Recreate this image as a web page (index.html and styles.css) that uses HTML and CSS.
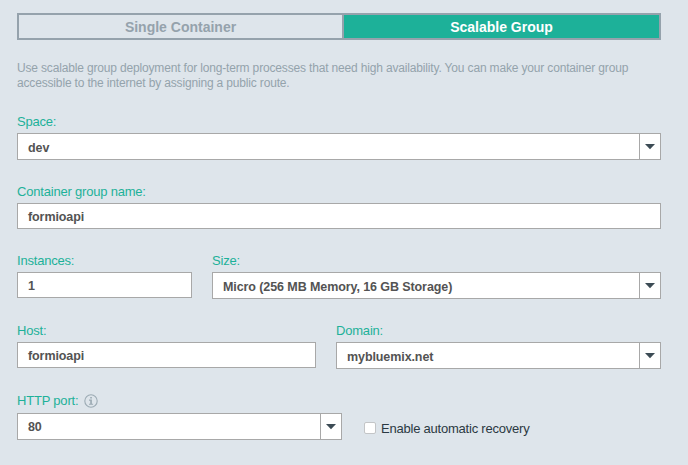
FILE: index.html
```html
<!DOCTYPE html>
<html lang="en">
<head>
<meta charset="utf-8">
<title>Container group</title>
<link rel="stylesheet" href="styles.css">
</head>
<body>
<form class="panel">
  <div class="tabs">
    <div class="tab"><span>Single Container</span></div>
    <div class="tab active"><span>Scalable Group</span></div>
  </div>
  <p class="intro">Use scalable group deployment for long-term processes that need high availability. You can make your container group<br>accessible to the internet by assigning a public route.</p>

  <div class="row space">
    <div class="field">
      <div class="label"><span>Space:</span></div>
      <div class="control select"><span class="value">dev</span><span class="toggle"><svg width="10" height="6" viewBox="0 0 10 6"><path d="M0 0H10L5 5.2Z"/></svg></span></div>
    </div>
  </div>
  <div class="row name">
    <div class="field">
      <div class="label"><span>Container group name:</span></div>
      <div class="control"><span class="value">formioapi</span></div>
    </div>
  </div>
  <div class="row size">
    <div class="field instances">
      <div class="label"><span>Instances:</span></div>
      <div class="control"><span class="value">1</span></div>
    </div>
    <div class="field">
      <div class="label"><span>Size:</span></div>
      <div class="control select"><span class="value">Micro (256 MB Memory, 16 GB Storage)</span><span class="toggle"><svg width="10" height="6" viewBox="0 0 10 6"><path d="M0 0H10L5 5.2Z"/></svg></span></div>
    </div>
  </div>
  <div class="row host">
    <div class="field hostname">
      <div class="label"><span>Host:</span></div>
      <div class="control"><span class="value">formioapi</span></div>
    </div>
    <div class="field">
      <div class="label"><span>Domain:</span></div>
      <div class="control select"><span class="value">mybluemix.net</span><span class="toggle"><svg width="10" height="6" viewBox="0 0 10 6"><path d="M0 0H10L5 5.2Z"/></svg></span></div>
    </div>
  </div>
  <div class="row port">
    <div class="field http">
      <div class="label"><span>HTTP port:</span><svg class="info" width="14" height="14" viewBox="0 0 14 14"><circle cx="7" cy="7" r="6.2"/><path d="M6.2 3H7.9V4.6H6.2ZM5 5.6H7.9V9.7H9.1V10.8H5V9.7H6.2V6.7H5Z"/></svg></div>
      <div class="control select"><span class="value">80</span><span class="toggle"><svg width="10" height="6" viewBox="0 0 10 6"><path d="M0 0H10L5 5.2Z"/></svg></span></div>
    </div>
    <div class="recovery"><span class="box"></span><span class="caption">Enable automatic recovery</span></div>
  </div>
</form>
</body>
</html>
```
FILE: styles.css
```css
* { box-sizing: border-box; }

body {
  margin: 0;
  background: #dee5eb;
  font-family: "Liberation Sans", Arial, sans-serif;
}

.panel {
  width: 644px;
  margin: 13px 0 0 17px;
}

.tabs {
  display: flex;
  height: 27px;
  border: 2px solid #95a2ac;
  font-size: 14px;
  font-weight: bold;
  line-height: 24px;
  text-align: center;
  color: #95a2ac;
}

.tab { flex: 0 0 325px; border-right: 2px solid #95a2ac; }
.tab.active { flex: 1; border-right: 0; background: #1db199; color: #fff; }

.intro {
  height: 30px;
  margin: 21px 0 0;
  font-size: 12px;
  line-height: 15px;
  letter-spacing: -0.163px;
  white-space: nowrap;
  color: #94a3ac;
}

.row { display: flex; gap: 20px; height: 46px; margin-top: 24px; }
.row.name { height: 45px; }
.row.host { height: 47px; }
.field { flex: 1; }
.instances { flex: 0 0 175px; }
.hostname { flex: 0 0 299px; }
.http { flex: 0 0 325px; }

.label {
  display: flex;
  align-items: center;
  height: 18px;
  padding-bottom: 4px;
  font-size: 13px;
  line-height: 14px;
  letter-spacing: -0.2px;
  white-space: nowrap;
  color: #1db199;
}

.port .label { padding-bottom: 6px; line-height: 12px; }

.control {
  display: flex;
  height: 26px;
  border: 1px solid #a8a8a8;
  background: #fff;
  font-size: 12.5px;
  font-weight: bold;
  line-height: 24px;
  letter-spacing: -0.09px;
  color: #535353;
}

.control.select { height: 27px; line-height: 26px; }
.value { flex: 1; padding: 1px 0 0 10px; }
.port .value { padding-top: 0; }

.toggle {
  display: flex;
  justify-content: center;
  width: 21px;
  padding-top: 10px;
  border-left: 1px solid #a8a8a8;
}

.toggle path { fill: #3c4b55; }

.info { flex: none; margin-left: 6px; }
.info circle { fill: none; stroke: #9cabb4; stroke-width: 1.1; }
.info path { fill: #9cabb4; }

.recovery {
  display: flex;
  gap: 5px;
  padding-top: 26px;
  margin-left: 2px;
  font-size: 13px;
  line-height: 15px;
  letter-spacing: -0.22px;
  color: #2b3942;
}

.box {
  width: 12px;
  height: 12px;
  margin-top: 1px;
  border: 1px solid #c3c5c7;
  border-radius: 2px;
  background: #fff;
}
```
